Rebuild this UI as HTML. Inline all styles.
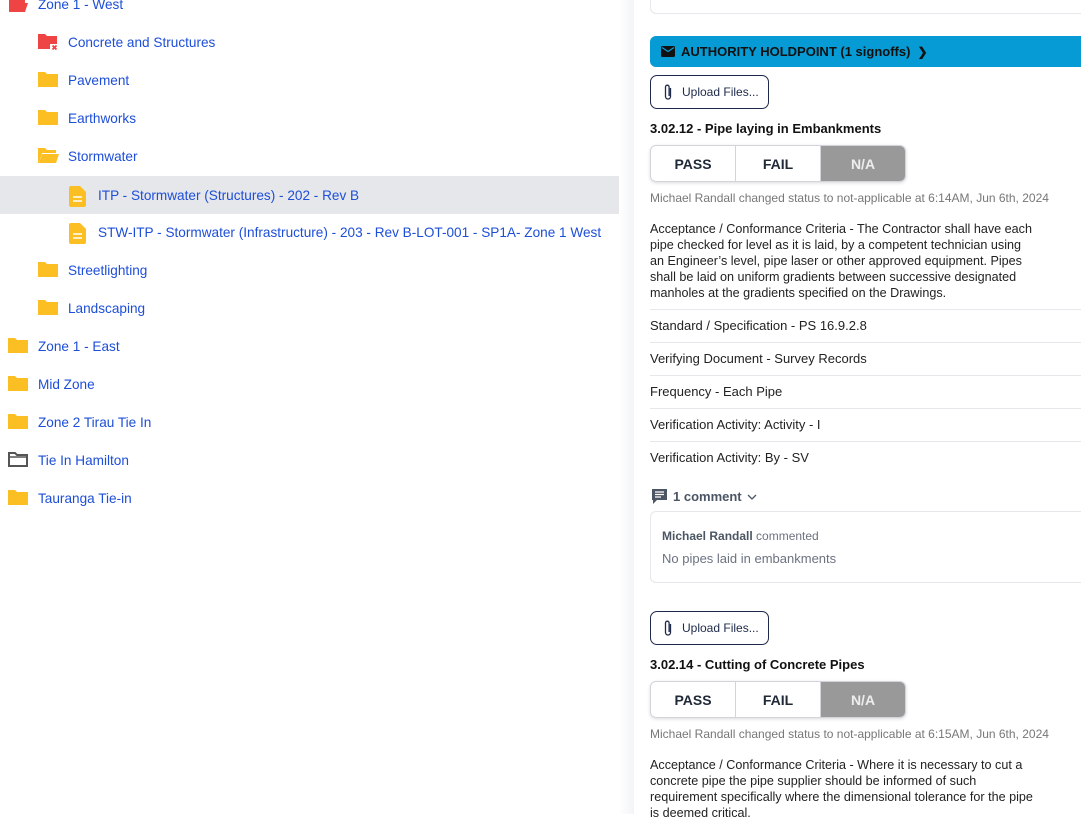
<!DOCTYPE html>
<html><head><meta charset="utf-8"><style>
*{box-sizing:border-box;margin:0;padding:0}
body{width:1081px;height:814px;overflow:hidden;background:#fff;font-family:"Liberation Sans",sans-serif;position:relative}
.row{position:absolute;left:0;width:619px;height:38px;display:flex;align-items:center;font-size:13.6px;color:#1d4ed8}
.row svg{position:absolute;top:10px}
.row span{position:absolute}
.hl{background:#e5e7eb}
.div{position:absolute;left:619px;top:0;width:15px;height:814px;background:linear-gradient(to right,#fff,#f3f4f6)}
.r{position:absolute;left:650px;color:#222;font-size:13px}
.up{position:absolute;left:650px;width:119px;height:34px;border:1px solid #1e2a4a;border-radius:7px;font-size:12px;color:#1e2a4a;display:flex;align-items:center}
.up svg{margin-left:12px;margin-right:9px}
.t{position:absolute;left:650px;font-weight:bold;font-size:13px;color:#111}
.seg{position:absolute;left:650px;width:256px;height:37px;border:1px solid #d1d5db;border-radius:6px;display:flex;overflow:hidden;box-shadow:0 1px 3px rgba(0,0,0,.15);font-weight:bold;font-size:14px;color:#1f2937}
.seg div{flex:1;display:flex;align-items:center;justify-content:center}
.seg div+div{border-left:1px solid #d1d5db}
.seg .na{background:#999;color:#eee}
.st{position:absolute;left:650px;font-size:12px;color:#777}
.p{position:absolute;left:650px;width:387px;font-size:12.6px;line-height:16px;color:#222}
.ln{position:absolute;left:650px;width:431px;border-top:1px solid #e5e7eb}
</style></head><body>
<div class="row" style="top:-15px"><svg style="left:8px" width="20" height="18" viewBox="0 0 20 18"><path d="M1 3h6l2 2h8v3H5L2 16H1z" fill="#ef4444"/><path d="M4 8h16l-3 9H1z" fill="#ef4444"/></svg><span style="left:38px">Zone 1 - West</span></div>
<div class="row" style="top:23px"><svg style="left:38px" width="22" height="20" viewBox="0 0 22 20"><path d="M0 1h7l2 2h10v8h-7v5H0z" fill="#ef4444"/><path d="M14.5 12.5l4 4M18.5 12.5l-4 4" stroke="#ef4444" stroke-width="1.8"/></svg><span style="left:68px">Concrete and Structures</span></div>
<div class="row" style="top:61px"><svg style="left:38px" width="20" height="16" viewBox="0 0 20 16"><path d="M0 1h7l2 2h11v13H0z" fill="#fbbf24"/></svg><span style="left:68px">Pavement</span></div>
<div class="row" style="top:99px"><svg style="left:38px" width="20" height="16" viewBox="0 0 20 16"><path d="M0 1h7l2 2h11v13H0z" fill="#fbbf24"/></svg><span style="left:68px">Earthworks</span></div>
<div class="row" style="top:137px"><svg style="left:38px" width="21" height="16" viewBox="0 0 21 16"><path d="M0 1h7l2 2h9v3H4L1 16H0z" fill="#fbbf24"/><path d="M4 7h17l-3 9H1z" fill="#fbbf24"/></svg><span style="left:68px">Stormwater</span></div>
<div class="row hl" style="top:176px"><svg style="left:69px" width="17" height="21" viewBox="0 0 17 21"><path d="M2 0h9l6 6v13a2 2 0 0 1-2 2H2a2 2 0 0 1-2-2V2a2 2 0 0 1 2-2z" fill="#fbbf24"/><path d="M4 11h9M4 15h9" stroke="#fff" stroke-width="1.6"/></svg><span style="left:98px">ITP - Stormwater (Structures) - 202 - Rev B</span></div>
<div class="row" style="top:213px"><svg style="left:69px" width="17" height="21" viewBox="0 0 17 21"><path d="M2 0h9l6 6v13a2 2 0 0 1-2 2H2a2 2 0 0 1-2-2V2a2 2 0 0 1 2-2z" fill="#fbbf24"/><path d="M4 11h9M4 15h9" stroke="#fff" stroke-width="1.6"/></svg><span style="left:98px">STW-ITP - Stormwater (Infrastructure) - 203 - Rev B-LOT-001 - SP1A- Zone 1 West</span></div>
<div class="row" style="top:251px"><svg style="left:38px" width="20" height="16" viewBox="0 0 20 16"><path d="M0 1h7l2 2h11v13H0z" fill="#fbbf24"/></svg><span style="left:68px">Streetlighting</span></div>
<div class="row" style="top:289px"><svg style="left:38px" width="20" height="16" viewBox="0 0 20 16"><path d="M0 1h7l2 2h11v13H0z" fill="#fbbf24"/></svg><span style="left:68px">Landscaping</span></div>
<div class="row" style="top:327px"><svg style="left:8px" width="20" height="16" viewBox="0 0 20 16"><path d="M0 1h7l2 2h11v13H0z" fill="#fbbf24"/></svg><span style="left:38px">Zone 1 - East</span></div>
<div class="row" style="top:365px"><svg style="left:8px" width="20" height="16" viewBox="0 0 20 16"><path d="M0 1h7l2 2h11v13H0z" fill="#fbbf24"/></svg><span style="left:38px">Mid Zone</span></div>
<div class="row" style="top:403px"><svg style="left:8px" width="20" height="16" viewBox="0 0 20 16"><path d="M0 1h7l2 2h11v13H0z" fill="#fbbf24"/></svg><span style="left:38px">Zone 2 Tirau Tie In</span></div>
<div class="row" style="top:441px"><svg style="left:8px" width="20" height="16" viewBox="0 0 20 16"><path d="M1 2h6l2 2h10v11H1z" fill="none" stroke="#555" stroke-width="2"/><path d="M1 6h18" stroke="#555" stroke-width="1.5"/></svg><span style="left:38px">Tie In Hamilton</span></div>
<div class="row" style="top:479px"><svg style="left:8px" width="20" height="16" viewBox="0 0 20 16"><path d="M0 1h7l2 2h11v13H0z" fill="#fbbf24"/></svg><span style="left:38px">Tauranga Tie-in</span></div>
<div class="div"></div>

<div style="position:absolute;left:650px;top:-10px;width:440px;height:24px;border:1px solid #e5e7eb;border-radius:6px"></div>
<div style="position:absolute;left:650px;top:36px;width:440px;height:31px;background:#069bd4;border-radius:6px 0 0 6px;display:flex;align-items:center;font-weight:bold;font-size:13px;color:#111"><svg style="margin:0 6px 0 11px" width="14" height="11" viewBox="0 0 14 11"><rect width="14" height="11" rx="1.5" fill="#111"/><path d="M1 1.5l6 4 6-4" stroke="#069bd4" stroke-width="1.3" fill="none"/></svg>AUTHORITY HOLDPOINT (1 signoffs)<span style="margin-left:7px;font-size:12px">&#10095;</span></div>

<div class="up" style="top:75px"><svg width="10" height="17" viewBox="0 0 10 17"><path d="M7.5 4v8.5a2.5 2.5 0 0 1-5 0V3a1.8 1.8 0 0 1 3.6 0v9" fill="none" stroke="#1e2a4a" stroke-width="1.3"/></svg>Upload Files...</div>
<div class="t" style="top:121px">3.02.12 - Pipe laying in Embankments</div>
<div class="seg" style="top:145px"><div>PASS</div><div>FAIL</div><div class="na">N/A</div></div>
<div class="st" style="top:191px">Michael Randall changed status to not-applicable at 6:14AM, Jun 6th, 2024</div>
<div class="p" style="top:221px">Acceptance / Conformance Criteria - The Contractor shall have each pipe checked for level as it is laid, by a competent technician using an Engineer’s level, pipe laser or other approved equipment. Pipes shall be laid on uniform gradients between successive designated manholes at the gradients specified on the Drawings.</div>
<div class="ln" style="top:309px"></div>
<div class="r" style="top:318px">Standard / Specification - PS 16.9.2.8</div>
<div class="ln" style="top:342px"></div>
<div class="r" style="top:351px">Verifying Document - Survey Records</div>
<div class="ln" style="top:375px"></div>
<div class="r" style="top:384px">Frequency - Each Pipe</div>
<div class="ln" style="top:408px"></div>
<div class="r" style="top:417px">Verification Activity: Activity - I</div>
<div class="ln" style="top:441px"></div>
<div class="r" style="top:450px">Verification Activity: By - SV</div>
<div style="position:absolute;left:651px;top:488px;display:flex;align-items:center;font-size:13px;font-weight:bold;color:#4b5563"><svg width="17" height="17" viewBox="0 0 17 17"><path d="M1 1h15v11H6l-4 4v-4H1z" fill="#4b5563"/><path d="M4 4h9M4 6.5h9M4 9h6" stroke="#fff" stroke-width="1.2"/></svg><span style="margin-left:5px">1 comment</span><svg style="margin-left:5px" width="10" height="6" viewBox="0 0 10 6"><path d="M1 1l4 4 4-4" stroke="#4b5563" stroke-width="1.3" fill="none"/></svg></div>
<div style="position:absolute;left:650px;top:511px;width:440px;height:72px;border:1px solid #e5e7eb;border-radius:6px"></div>
<div style="position:absolute;left:662px;top:529px;font-size:12px;color:#6b7280"><b style="color:#4b5563">Michael Randall</b> commented</div>
<div style="position:absolute;left:662px;top:551px;font-size:13px;color:#6b7280">No pipes laid in embankments</div>

<div class="up" style="top:611px"><svg width="10" height="17" viewBox="0 0 10 17"><path d="M7.5 4v8.5a2.5 2.5 0 0 1-5 0V3a1.8 1.8 0 0 1 3.6 0v9" fill="none" stroke="#1e2a4a" stroke-width="1.3"/></svg>Upload Files...</div>
<div class="t" style="top:657px">3.02.14 - Cutting of Concrete Pipes</div>
<div class="seg" style="top:681px"><div>PASS</div><div>FAIL</div><div class="na">N/A</div></div>
<div class="st" style="top:727px">Michael Randall changed status to not-applicable at 6:15AM, Jun 6th, 2024</div>
<div class="p" style="top:757px">Acceptance / Conformance Criteria - Where it is necessary to cut a concrete pipe the pipe supplier should be informed of such requirement specifically where the dimensional tolerance for the pipe is deemed critical.</div>
</body></html>
